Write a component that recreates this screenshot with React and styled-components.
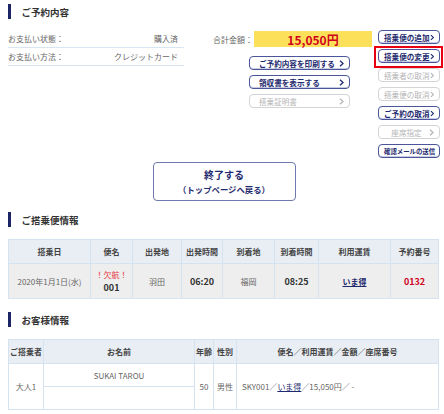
import styled, { createGlobalStyle } from 'styled-components';

const GlobalStyle = createGlobalStyle`
  body {
    margin: 0;
    background: #ffffff;
    font-family: "Noto Sans CJK JP", "Noto Sans", sans-serif;
    color: #555555;
  }
`;

const Page = styled.div`
  width: 444px;
  padding: 0 4px 0 8px;
  box-sizing: border-box;
`;

const Heading = styled.h2`
  display: flex;
  align-items: center;
  height: 15px;
  margin: ${p => p.$top || 0}px 0 0;
  font-size: 9.5px;
  font-weight: 700;
  color: #333333;

  &::before {
    content: '';
    width: 2.5px;
    height: 15px;
    background: #1c2566;
    margin-right: 11px;
  }
`;

const Summary = styled.div`
  display: flex;
  margin-top: 11px;
`;

const InfoList = styled.div`
  width: 176px;
`;

const InfoRow = styled.div`
  display: flex;
  justify-content: space-between;
  align-items: center;
  height: 17px;
  padding: 0 6px 0 0;
  border-bottom: 1px solid #d8e6f4;
  font-size: 8px;
  color: #666666;
`;

const Middle = styled.div`
  width: 159px;
  margin-left: 29px;
`;

const TotalRow = styled.div`
  display: flex;
  align-items: center;
  margin-top: 1px;
  font-size: 8px;
  color: #666666;
`;

const TotalLabel = styled.span`
  width: 41px;
`;

const Price = styled.div`
  width: 118px;
  height: 16px;
  display: flex;
  align-items: center;
  justify-content: center;
  background: #fde05a;
  color: #d0021b;
  font-size: 12px;
  font-weight: 700;
`;

const ButtonStack = styled.div`
  display: flex;
  flex-direction: column;
  gap: 5px;
  width: ${p => p.$width}px;
  margin: ${p => p.$margin || '0'};
`;

const ActionButton = styled.button`
  position: relative;
  display: flex;
  align-items: center;
  width: 100%;
  height: 14px;
  padding: 0 5px 0 ${p => (p.$center ? 5 : 9)}px;
  box-sizing: border-box;
  border: 1px solid #4a5699;
  border-radius: 4px;
  box-shadow: inset 0 -1px 0 #c7cce4;
  background: #ffffff;
  color: #1e2a6e;
  font-family: inherit;
  font-size: ${p => p.$size || 7.6}px;
  font-weight: 700;
  white-space: nowrap;
  cursor: pointer;

  > span {
    flex: 1;
    text-align: ${p => (p.$center ? 'center' : 'left')};
  }

  &:disabled {
    border-color: #d4d4d4;
    box-shadow: none;
    color: #b5b5b5;
    font-weight: 400;
    cursor: default;
  }
`;

const Highlight = styled.div`
  position: relative;

  &::after {
    content: '';
    position: absolute;
    top: -3px;
    right: -3px;
    bottom: -5px;
    left: -4px;
    border: 2px solid #e60012;
    pointer-events: none;
  }
`;

const FinishButton = styled.button`
  display: flex;
  flex-direction: column;
  align-items: center;
  justify-content: center;
  width: 143px;
  height: 39px;
  margin: 4px auto 0;
  padding: 0;
  border: 1px solid #6f79ad;
  border-radius: 4px;
  background: #ffffff;
  color: #1e2a6e;
  font-family: inherit;
  font-weight: 700;
  cursor: pointer;
`;

const FinishMain = styled.span`
  font-size: 10px;
  line-height: 14px;
`;

const FinishSub = styled.span`
  font-size: 8.4px;
  line-height: 14px;
`;

const Table = styled.table`
  width: 430px;
  margin-top: 12px;
  border-collapse: collapse;
  table-layout: fixed;
  font-size: 8px;

  th,
  td {
    border: 1px solid #d5e3f1;
    text-align: center;
    padding: 0;
  }

  th {
    height: ${p => p.$headH}px;
    background: #e9eef4;
    color: #444444;
    font-weight: 700;
  }

  td {
    background: ${p => p.$bodyBg};
    color: #666666;
  }
`;

const Col = styled.col`
  width: ${p => p.$w}px;
`;

const BodyRow = styled.tr`
  height: ${p => p.$h}px;
`;

const Strong = styled.span`
  display: block;
  font-size: 9px;
  font-weight: 700;
  color: ${p => p.$color || '#333333'};
`;

const Cancelled = styled.span`
  display: block;
  color: #e8323c;
  font-size: 8px;
  line-height: 12px;
`;

const FareLink = styled.a`
  color: #1e2a6e;
  font-weight: ${p => (p.$bold ? 700 : 400)};
  text-decoration: underline;
`;

const LeftCell = styled.td`
  && {
    text-align: left;
    padding-left: 5px;
  }
`;

const flightCols = [82, 42, 49, 41, 52, 44, 72, 48];
const flightHeads = ['搭乗日', '便名', '出発地', '出発時間', '到着地', '到着時間', '利用運賃', '予約番号'];
const guestCols = [35, 151, 19, 23, 202];
const guestHeads = ['ご搭乗者', 'お名前', '年齢', '性別', '便名／利用運賃／金額／座席番号'];

const Chevron = () => (
  <svg width="5" height="7" viewBox="0 0 5 7">
    <polyline points="1,0.8 4,3.5 1,6.2" fill="none" stroke="currentColor" strokeWidth="1.3" />
  </svg>
);

function Btn({ children, disabled, center, size }) {
  return (
    <ActionButton disabled={disabled} $center={center} $size={size}>
      <span>{children}</span>
      <Chevron />
    </ActionButton>
  );
}

function Head({ cols, heads }) {
  return (
    <>
      <colgroup>
        {cols.map((w, i) => (
          <Col key={i} $w={w} />
        ))}
      </colgroup>
      <thead>
        <tr>
          {heads.map(h => (
            <th key={h}>{h}</th>
          ))}
        </tr>
      </thead>
    </>
  );
}

export default function App() {
  return (
    <>
      <GlobalStyle />
      <Page>
        <Heading $top={4}>ご予約内容</Heading>
        <Summary>
          <InfoList>
            <InfoRow>
              <span>お支払い状態：</span>
              <span>購入済</span>
            </InfoRow>
            <InfoRow>
              <span>お支払い方法：</span>
              <span>クレジットカード</span>
            </InfoRow>
          </InfoList>
          <Middle>
            <TotalRow>
              <TotalLabel>合計金額：</TotalLabel>
              <Price>15,050円</Price>
            </TotalRow>
            <ButtonStack $width={101} $margin="9px 0 0 36px">
              <Btn>ご予約内容を印刷する</Btn>
              <Btn>領収書を表示する</Btn>
              <Btn disabled>搭乗証明書</Btn>
            </ButtonStack>
          </Middle>
          <ButtonStack $width={62} $margin="0 0 0 6px">
            <Btn center>搭乗便の追加</Btn>
            <Highlight>
              <Btn center>搭乗便の変更</Btn>
            </Highlight>
            <Btn center disabled>搭乗者の取消</Btn>
            <Btn center disabled>搭乗便の取消</Btn>
            <Btn center>ご予約の取消</Btn>
            <Btn center disabled>座席指定</Btn>
            <Btn center size={6.4}>確認メールの送信</Btn>
          </ButtonStack>
        </Summary>

        <FinishButton>
          <FinishMain>終了する</FinishMain>
          <FinishSub>（トップページへ戻る）</FinishSub>
        </FinishButton>

        <Heading $top={11}>ご搭乗便情報</Heading>
        <Table $headH={23} $bodyBg="#eeeeee">
          <Head cols={flightCols} heads={flightHeads} />
          <tbody>
            <BodyRow $h={35}>
              <td>2020年1月1日(水)</td>
              <td>
                <Cancelled>！欠航！</Cancelled>
                <Strong>001</Strong>
              </td>
              <td>羽田</td>
              <td><Strong>06:20</Strong></td>
              <td>福岡</td>
              <td><Strong>08:25</Strong></td>
              <td><FareLink $bold href="#">いま得</FareLink></td>
              <td><Strong $color="#d0021b">0132</Strong></td>
            </BodyRow>
          </tbody>
        </Table>

        <Heading $top={13}>お客様情報</Heading>
        <Table $headH={23} $bodyBg="#ffffff">
          <Head cols={guestCols} heads={guestHeads} />
          <tbody>
            <BodyRow $h={23}>
              <td rowSpan={2}>大人1</td>
              <td>SUKAI TAROU</td>
              <td rowSpan={2}>50</td>
              <td rowSpan={2}>男性</td>
              <LeftCell rowSpan={2}>
                SKY001／<FareLink href="#">いま得</FareLink>／15,050円／ -
              </LeftCell>
            </BodyRow>
            <BodyRow $h={23}>
              <td></td>
            </BodyRow>
          </tbody>
        </Table>
      </Page>
    </>
  );
}
